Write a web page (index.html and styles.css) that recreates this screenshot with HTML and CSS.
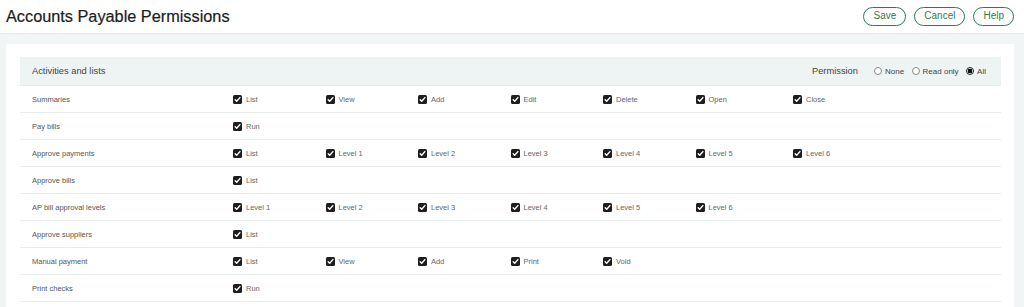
FILE: index.html
```html
<!DOCTYPE html>
<html>
<head>
<meta charset="utf-8">
<link rel="stylesheet" href="styles.css">
</head>
<body>
<header class="topbar">
  <h1 class="title">Accounts Payable Permissions</h1>
  <div class="actions">
    <button class="btn">Save</button>
    <button class="btn">Cancel</button>
    <button class="btn">Help</button>
  </div>
</header>
<main class="main">
  <section class="card">
    <div class="section-head">
      <span class="section-title">Activities and lists</span>
      <div class="perm">
        <span class="perm-label">Permission</span>
        <span class="radio"><span class="circle"></span>None</span>
        <span class="radio"><span class="circle"></span>Read only</span>
        <span class="radio"><span class="circle on"></span>All</span>
      </div>
    </div>
    <div id="rows"></div>
  </section>
</main>
<script src="app.js"></script>
</body>
</html>
```
FILE: app.js
```js
var data = [
  ["Summaries", ["List","View","Add","Edit","Delete","Open","Close"]],
  ["Pay bills", ["Run"]],
  ["Approve payments", ["List","Level 1","Level 2","Level 3","Level 4","Level 5","Level 6"]],
  ["Approve bills", ["List"]],
  ["AP bill approval levels", ["Level 1","Level 2","Level 3","Level 4","Level 5","Level 6"]],
  ["Approve suppliers", ["List"]],
  ["Manual payment", ["List","View","Add","Print","Void"]],
  ["Print checks", ["Run"]]
];
var box = '<svg class="cb" width="9" height="9" viewBox="0 0 9 9"><rect x="0" y="0" width="9" height="9" rx="1.6" fill="#1e1e1e"/><path d="M2.2 4.8 L3.7 6.3 L6.9 2.6" fill="none" stroke="#fff" stroke-width="1.4" stroke-linecap="round" stroke-linejoin="round"/></svg>';
var html = "";
data.forEach(function (r) {
  html += '<div class="row"><span class="row-label">' + r[0] + '</span>';
  r[1].forEach(function (o) {
    html += '<span class="opt">' + box + '<span>' + o + '</span></span>';
  });
  html += '</div>';
});
document.getElementById("rows").innerHTML = html;
```
FILE: styles.css
```css
* { box-sizing: border-box; }
html, body { margin: 0; padding: 0; }
body {
  background: #f1f5f5;
  font-family: "Liberation Sans", Arial, sans-serif;
  color: #333;
}
.topbar {
  height: 34px;
  background: #fff;
  border-bottom: 1px solid #e4eaea;
  display: flex;
  align-items: center;
  justify-content: space-between;
  padding: 0 10px 1px 6px;
}
.title {
  margin: 0;
  font-size: 16.3px;
  font-weight: normal;
  color: #1c1c1c;
  -webkit-text-stroke: 0.2px #1c1c1c;
}
.actions {
  display: flex;
  gap: 8px;
}
.btn {
  height: 19px;
  padding: 0 9px;
  border: 1.5px solid #2f7a55;
  border-radius: 10px;
  background: #fff;
  color: #2f7a55;
  font-family: "Liberation Sans", Arial, sans-serif;
  font-size: 10px;
  line-height: 16px;
}
.main {
  padding: 10px 10px 0 6px;
}
.card {
  background: #fff;
  padding: 13px 13px 20px 14px;
  border-radius: 2px;
}
.section-head {
  height: 29px;
  background: #eef3f3;
  border-bottom: 1px solid #e6ecec;
  display: flex;
  align-items: center;
  justify-content: space-between;
  padding: 0 15px 0 12px;
  font-size: 9.3px;
  color: #444;
}
.perm {
  display: flex;
  align-items: center;
}
.perm-label {
  margin-right: 16px;
}
.radio {
  display: flex;
  align-items: center;
  font-size: 8px;
  color: #444;
  margin-right: 7.5px;
}
.radio:last-child { margin-right: 0; }
.circle {
  width: 8px;
  height: 8px;
  border: 1px solid #888;
  border-radius: 50%;
  margin-right: 3px;
  background: #fff;
}
.circle.on {
  border-color: #222;
  background: radial-gradient(circle, #111 0 2.3px, #fff 2.6px);
}
.row {
  height: 27px;
  border-bottom: 1px solid #e7ecec;
  display: grid;
  grid-template-columns: 201px 92.5px 92.5px 92.5px 92.5px 92.5px 97.5px 1fr;
  align-items: center;
  padding-left: 12px;
  font-size: 7.5px;
  color: #555;
}
.row-label {
  color: #555;
}
.opt {
  display: flex;
  align-items: center;
  gap: 4px;
  color: #666;
}
.cb { display: block; }
```
